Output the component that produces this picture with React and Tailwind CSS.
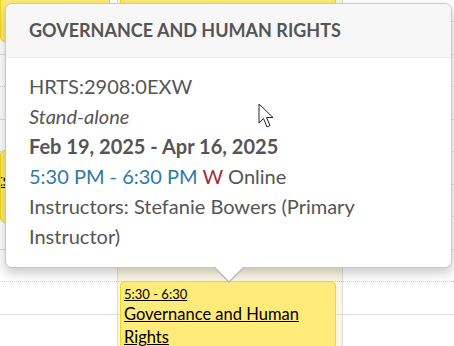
import React from 'react';

const ROWS = Array.from({ length: 11 }, (_, i) => i);

function Column({ className = '', children }) {
  return (
    <div className={`relative h-full ${className}`}>
      <div className="flex flex-col pt-[21px]">
        {ROWS.map((i) => (
          <div
            key={i}
            className={`h-[32.5px] border-t ${i % 2 === 0 ? 'border-dotted border-[#cfcfcf]' : 'border-solid border-[#dddddd]'}`}
          />
        ))}
      </div>
      {children}
    </div>
  );
}

function Event({ className, children }) {
  return (
    <div className={`absolute overflow-hidden rounded-[5px] border border-[#f2d81c] bg-[#ffeb7a] px-[3px] text-black ${className}`}>
      {children}
    </div>
  );
}

export default function App() {
  return (
    <div className="relative h-[346px] w-[454px] overflow-hidden bg-white font-['Lato','Liberation_Sans',sans-serif]">
      {/* calendar grid behind the popover */}
      <div className="flex h-full">
        <Column className="w-[118px] border-r border-[#dddddd]">
          <Event className="left-0 right-[7px] top-[-6px] h-[48px]" />
          <Event className="left-0 right-[7px] top-[150px] h-[73px] text-[16.5px] leading-[23px]">
            <div className="-ml-[39px] pt-[18px] underline">Rights</div>
          </Event>
        </Column>
        <Column className="w-[225px] border-r border-[#dddddd] bg-[#fcf7e4]">
          <Event className="left-[2px] right-[6px] top-[-6px] h-[40px]" />
          <Event className="left-[2px] right-[6px] top-[281px] h-[80px]">
            <div className="pt-[3px] text-[13px] leading-[18px] underline">5:30 - 6:30</div>
            <div className="text-[16.5px] leading-[23px] underline">Governance and Human Rights</div>
          </Event>
        </Column>
        <Column className="flex-1" />
      </div>

      {/* popover */}
      <div className="absolute left-[5px] top-[3px] w-[447px] rounded-[7px] border border-[#c8c8c8] bg-white shadow-[0_5px_12px_rgba(0,0,0,0.22)]">
        <div className="flex h-[54px] items-center rounded-t-[7px] border-b border-[#ebebeb] bg-[#f7f7f7] px-[23px]">
          <h2 className="text-[18px] font-bold uppercase text-[#555555]">Governance and Human Rights</h2>
        </div>
        <div className="px-[23px] pb-[16px] pt-[13px] text-[20px] leading-[30px] text-[#555555]">
          <div>HRTS:2908:0EXW</div>
          <div className="italic">Stand-alone</div>
          <div className="font-bold">Feb 19, 2025 - Apr 16, 2025</div>
          <div>
            <span className="text-[#2d7ba3]">5:30 PM - 6:30 PM</span>{' '}
            <span className="text-[#a52a3a]">W</span> Online
          </div>
          <div>Instructors: Stefanie Bowers (Primary Instructor)</div>
        </div>
        {/* arrow */}
        <div className="absolute left-[207px] top-full h-0 w-0 border-x-[16px] border-t-[16px] border-x-transparent border-t-[#b8b8b8]" />
        <div className="absolute left-[208px] top-[calc(100%-1px)] h-0 w-0 border-x-[15px] border-t-[15px] border-x-transparent border-t-white" />

        {/* mouse pointer */}
        <svg className="absolute left-[252px] top-[99px]" width="18" height="28" viewBox="0 0 18 28">
          <path d="M1 1 L1 20 L5.5 15.5 L9 24 L12 22.5 L8.5 14.5 L15 14.5 Z" fill="white" stroke="#222" strokeWidth="1" strokeLinejoin="miter" />
        </svg>
      </div>
    </div>
  );
}
